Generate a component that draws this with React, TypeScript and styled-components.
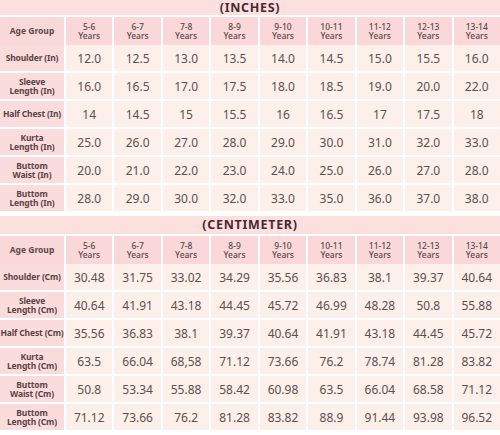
import React from "react";
import styled, { createGlobalStyle } from "styled-components";

const Global = createGlobalStyle`
  html, body { margin: 0; padding: 0; background: #ffffff; }
  body { font-family: "Noto Sans", "Open Sans", sans-serif; }
`;

const Page = styled.div`
  width: 500px;
  display: flex;
  flex-direction: column;
  gap: 5px;
`;

const Section = styled.section`
  display: flex;
  flex-direction: column;
  gap: 2px;
`;

const TitleBand = styled.div<{ $h: number }>`
  height: ${(p) => p.$h}px;
  background: #fcdfdf;
  display: flex;
  align-items: center;
  justify-content: center;
  font-family: "Noto Sans", sans-serif;
  font-weight: 700;
  font-size: 12.5px;
  line-height: 12px;
  letter-spacing: 0.7px;
  color: #4a2a2c;
`;

const Grid = styled.div`
  display: grid;
  grid-template-columns: 64px repeat(9, 1fr);
  grid-auto-rows: 26px;
  gap: 2px;
  & > :nth-child(-n + 10) {
    height: 28px;
  }
`;

const Cell = styled.div`
  display: flex;
  align-items: center;
  justify-content: center;
  text-align: center;
`;

const HeadCell = styled(Cell)<{ $strong?: boolean }>`
  background: #fad8d9;
  font-size: 8.5px;
  line-height: 9.5px;
  font-weight: ${(p) => (p.$strong ? 700 : 500)};
  color: #5c4a4a;
  white-space: pre-line;
`;

const LabelCell = styled(Cell)`
  background: #fbdcdc;
  font-size: 8.5px;
  line-height: 9.5px;
  font-weight: 700;
  letter-spacing: -0.15px;
  color: #5a4446;
  white-space: pre;
`;

const DataCell = styled(Cell)`
  background: #fdefe9;
  font-size: 12px;
  color: #5e5050;
`;

const ages = ["5-6", "6-7", "7-8", "8-9", "9-10", "10-11", "11-12", "12-13", "13-14"];

type Table = { title: string; titleH: number; rows: [string, string[]][] };

const tables: Table[] = [
  {
    title: "(INCHES)",
    titleH: 15,
    rows: [
      ["Shoulder (In)", ["12.0", "12.5", "13.0", "13.5", "14.0", "14.5", "15.0", "15.5", "16.0"]],
      ["Sleeve\nLength (In)", ["16.0", "16.5", "17.0", "17.5", "18.0", "18.5", "19.0", "20.0", "22.0"]],
      ["Half Chest (In)", ["14", "14.5", "15", "15.5", "16", "16.5", "17", "17.5", "18"]],
      ["Kurta\nLength (In)", ["25.0", "26.0", "27.0", "28.0", "29.0", "30.0", "31.0", "32.0", "33.0"]],
      ["Buttom\nWaist (In)", ["20.0", "21.0", "22.0", "23.0", "24.0", "25.0", "26.0", "27.0", "28.0"]],
      ["Buttom\nLength (In)", ["28.0", "29.0", "30.0", "32.0", "33.0", "35.0", "36.0", "37.0", "38.0"]],
    ],
  },
  {
    title: "(CENTIMETER)",
    titleH: 18,
    rows: [
      ["Shoulder (Cm)", ["30.48", "31.75", "33.02", "34.29", "35.56", "36.83", "38.1", "39.37", "40.64"]],
      ["Sleeve\nLength (Cm)", ["40.64", "41.91", "43.18", "44.45", "45.72", "46.99", "48.28", "50.8", "55.88"]],
      ["Half Chest (Cm)", ["35.56", "36.83", "38.1", "39.37", "40.64", "41.91", "43.18", "44.45", "45.72"]],
      ["Kurta\nLength (Cm)", ["63.5", "66.04", "68,58", "71.12", "73.66", "76.2", "78.74", "81.28", "83.82"]],
      ["Buttom\nWaist (Cm)", ["50.8", "53.34", "55.88", "58.42", "60.98", "63.5", "66.04", "68.58", "71.12"]],
      ["Buttom\nLength (Cm)", ["71.12", "73.66", "76.2", "81.28", "83.82", "88.9", "91.44", "93.98", "96.52"]],
    ],
  },
];

export default function App() {
  return (
    <>
      <Global />
      <Page>
        {tables.map((t) => (
          <Section key={t.title}>
            <TitleBand $h={t.titleH}>{t.title}</TitleBand>
            <Grid>
              <HeadCell $strong>Age Group</HeadCell>
              {ages.map((a) => (
                <HeadCell key={a}>{`${a}\nYears`}</HeadCell>
              ))}
              {t.rows.map(([label, vals]) => (
                <React.Fragment key={label}>
                  <LabelCell>{label}</LabelCell>
                  {vals.map((v, i) => (
                    <DataCell key={i}>{v}</DataCell>
                  ))}
                </React.Fragment>
              ))}
            </Grid>
          </Section>
        ))}
      </Page>
    </>
  );
}
